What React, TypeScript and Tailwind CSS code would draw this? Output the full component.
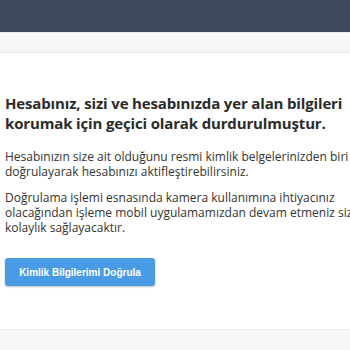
export default function App() {
  return (
    <div className="flex h-[350px] w-[350px] flex-col overflow-hidden bg-white">
      <header className="h-[32px] shrink-0 bg-[#3f475e]" />
      <div className="h-[21px] shrink-0 border-t border-b border-t-[#eceef3] border-b-[#e8e8e8] bg-gradient-to-b from-[#fafafa] to-[#f5f5f5]" />
      <main className="flex-1 whitespace-nowrap px-[5px] pt-[40px] font-['Open_Sans',sans-serif] text-[#333]">
        <h1 className="text-[15px] font-bold leading-[20px] tracking-[-0.15px] text-[#2b2b2b]">
          Hesabınız, sizi ve hesabınızda yer alan bilgileri
          <br />
          korumak için geçici olarak durdurulmuştur.
        </h1>
        <p className="mt-[16px] text-[12px] leading-[15px]">
          Hesabınızın size ait olduğunu resmi kimlik belgelerinizden biri
          <br />
          doğrulayarak hesabınızı aktifleştirebilirsiniz.
        </p>
        <p className="mt-[11px] text-[12px] leading-[15px]">
          Doğrulama işlemi esnasında kamera kullanımına ihtiyacınız
          <br />
          olacağından işleme mobil uygulamamızdan devam etmeniz size
          <br />
          kolaylık sağlayacaktır.
        </p>
        <button className="mt-[23px] h-[28px] w-[150px] rounded-[3px] bg-[#4a9be6] font-['Liberation_Sans',Arial,sans-serif] text-[10px] font-bold text-white shadow-[0_1px_2px_rgba(0,0,0,0.25)]">
          Kimlik Bilgilerimi Doğrula
        </button>
      </main>
      <footer className="h-[21px] shrink-0 border-t border-[#ebebeb] bg-[#f7f7f7]" />
    </div>
  );
}
